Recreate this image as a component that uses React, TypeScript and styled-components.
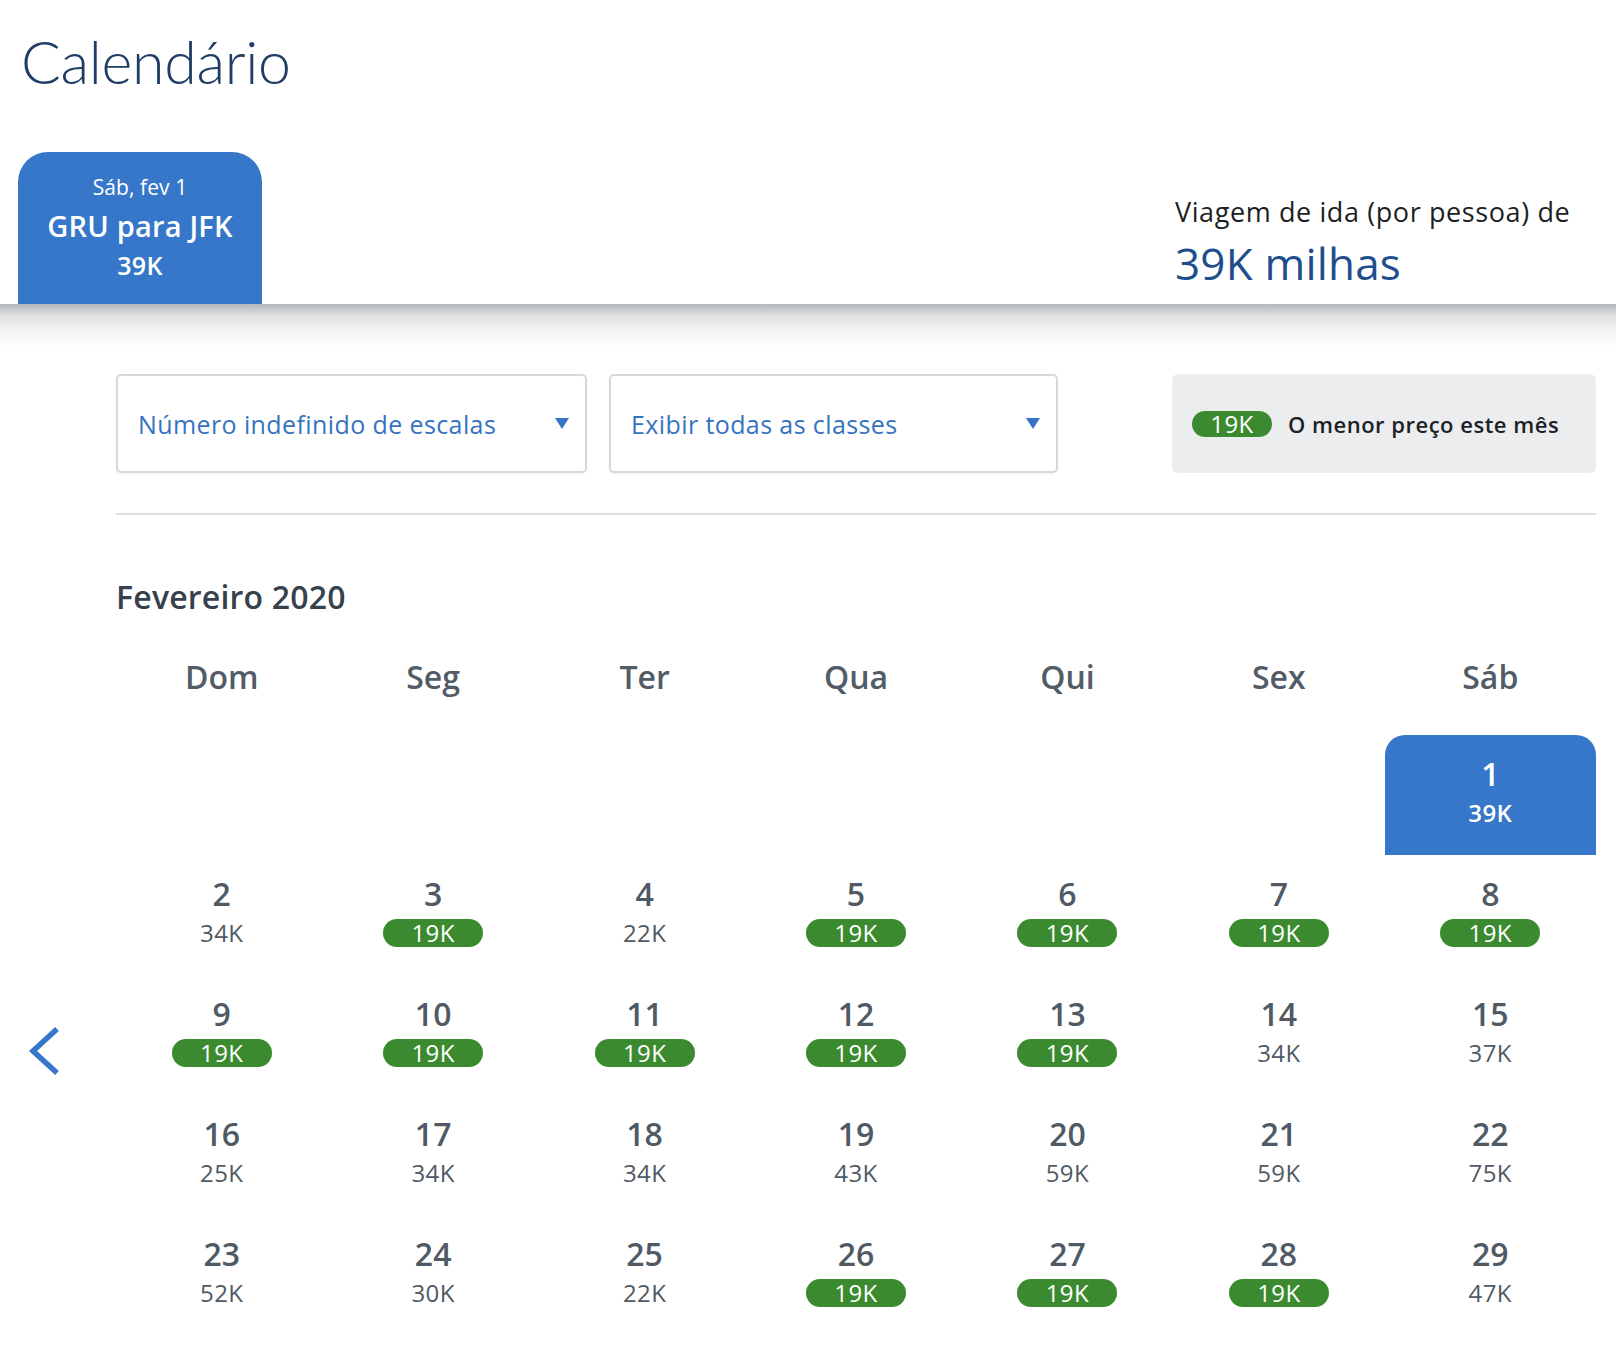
import React from "react"
import styled, { createGlobalStyle } from "styled-components"

const GlobalStyle = createGlobalStyle`
    body {
        margin: 0;
        background: #ffffff;
        font-family: "Open Sans", Lato, "Liberation Sans", sans-serif;
    }
`

const Page = styled.div`
    width: 1616px;
    min-height: 1372px;
    background: #ffffff;
`

const Header = styled.header`
    padding: 0 20px 0 18px;
`

const Title = styled.h1`
    margin: 0;
    padding: 24px 0 0 3px;
    font-family: Lato, "Open Sans", sans-serif;
    font-size: 59px;
    line-height: 76px;
    font-weight: 300;
    letter-spacing: -0.3px;
    color: #1f3d66;
`

const HeaderRow = styled.div`
    display: flex;
    justify-content: space-between;
    align-items: flex-end;
    margin-top: 52px;
`

const Tab = styled.div`
    width: 244px;
    height: 152px;
    box-sizing: border-box;
    padding-top: 21px;
    background: #3677c9;
    border-radius: 30px 30px 0 0;
    color: #ffffff;
    display: flex;
    flex-direction: column;
    align-items: center;
`

const TabDate = styled.div`
    font-size: 21px;
    line-height: 28px;
    font-weight: 400;
    letter-spacing: 0.1px;
`

const TabRoute = styled.div`
    margin-top: 7px;
    font-size: 29px;
    line-height: 36px;
    font-weight: 600;
    letter-spacing: 0.2px;
`

const TabPrice = styled.div`
    margin-top: 5px;
    font-size: 25px;
    line-height: 32px;
    font-weight: 600;
    letter-spacing: 0.3px;
`

const Summary = styled.div`
    width: 421px;
    padding-bottom: 14px;
`

const SummaryLabel = styled.div`
    font-size: 27px;
    line-height: 36px;
    color: #1b1f24;
    letter-spacing: 0.6px;
`

const SummaryValue = styled.div`
    margin-top: 6px;
    font-size: 44px;
    line-height: 54px;
    color: #1f4e8c;
    letter-spacing: 0.2px;
`

const ShadowBand = styled.div`
    height: 50px;
    background: linear-gradient(to bottom, #b5b8bc 0%, #dcdedf 22%, #eff0f0 45%, #fbfbfb 75%, #ffffff 100%);
`

const Content = styled.main`
    padding: 20px 20px 36px 116px;
`

const Filters = styled.div`
    display: flex;
    align-items: stretch;
    gap: 22px;
    height: 99px;
`

const Select = styled.div<{ $w: number }>`
    width: ${p => p.$w}px;
    box-sizing: border-box;
    border: 2px solid #d4d9dd;
    border-radius: 5px;
    box-shadow: 0 1px 2px rgba(0, 0, 0, 0.06);
    padding: 0 16px 0 20px;
    display: flex;
    align-items: center;
    justify-content: space-between;
    font-size: 25px;
    letter-spacing: 0.4px;
    color: #3673bf;
`

const Caret = styled.span`
    width: 0;
    height: 0;
    border-left: 7.5px solid transparent;
    border-right: 7.5px solid transparent;
    border-top: 11px solid #3673c6;
`

const Legend = styled.div`
    margin-left: auto;
    width: 424px;
    box-sizing: border-box;
    background: #ebedef;
    border-radius: 6px;
    display: flex;
    align-items: center;
    padding-left: 20px;
    gap: 16px;
    font-size: 22px;
    font-weight: 600;
    letter-spacing: 0.5px;
    color: #1c2126;
`

const Pill = styled.span<{ $w: number; $h: number }>`
    display: inline-flex;
    align-items: center;
    justify-content: center;
    width: ${p => p.$w}px;
    height: ${p => p.$h}px;
    border-radius: ${p => p.$h / 2}px;
    background: #3b8a2f;
    color: #ffffff;
    font-size: 24px;
    font-weight: 500;
    letter-spacing: 0.4px;
`

const Divider = styled.hr`
    margin: 40px 0 0;
    border: none;
    height: 2px;
    background: #dcdfe2;
`

const MonthTitle = styled.h2`
    margin: 62px 0 0;
    font-size: 32px;
    line-height: 40px;
    font-weight: 600;
    letter-spacing: 0.2px;
    color: #36414b;
`

const WeekDays = styled.div`
    display: grid;
    grid-template-columns: repeat(7, 1fr);
    margin-top: 40px;
`

const WeekDay = styled.div`
    text-align: center;
    font-size: 32px;
    line-height: 40px;
    font-weight: 600;
    color: #525c66;
`

const CalendarRow = styled.div`
    display: flex;
    margin: 38px 0 0 -116px;
`

const NavColumn = styled.div`
    width: 116px;
    display: flex;
    align-items: center;
    padding: 32px 0 0 27px;
    box-sizing: border-box;
`

const Grid = styled.div`
    flex: 1;
    display: grid;
    grid-template-columns: repeat(7, 1fr);
    grid-auto-rows: 120px;
`

const Cell = styled.div<{ $selected?: boolean }>`
    display: flex;
    flex-direction: column;
    align-items: center;
    padding-top: 19px;
    box-sizing: border-box;
    background: ${p => (p.$selected ? "#3677c9" : "transparent")};
    border-radius: ${p => (p.$selected ? "20px 20px 0 0" : "0")};
    color: ${p => (p.$selected ? "#ffffff" : "#4f5a64")};
`

const DayNum = styled.div`
    font-size: 32px;
    line-height: 40px;
    font-weight: 600;
`

const Price = styled.div<{ $strong?: boolean }>`
    margin-top: 5px;
    height: 28px;
    line-height: 28px;
    font-size: 24px;
    font-weight: ${p => (p.$strong ? 600 : 400)};
    letter-spacing: 0.4px;
`

const ChevronLeft = () => (
    <svg width="34" height="50" viewBox="0 0 34 50" fill="none">
        <path d="M30 3 L6 25 L30 47" stroke="#3677c9" strokeWidth="5.5" strokeLinecap="butt" strokeLinejoin="miter" />
    </svg>
)

type Day = { d: number; price: string; low?: boolean }

const days: Day[] = [
    { d: 1, price: "39K" },
    { d: 2, price: "34K" },
    { d: 3, price: "19K", low: true },
    { d: 4, price: "22K" },
    { d: 5, price: "19K", low: true },
    { d: 6, price: "19K", low: true },
    { d: 7, price: "19K", low: true },
    { d: 8, price: "19K", low: true },
    { d: 9, price: "19K", low: true },
    { d: 10, price: "19K", low: true },
    { d: 11, price: "19K", low: true },
    { d: 12, price: "19K", low: true },
    { d: 13, price: "19K", low: true },
    { d: 14, price: "34K" },
    { d: 15, price: "37K" },
    { d: 16, price: "25K" },
    { d: 17, price: "34K" },
    { d: 18, price: "34K" },
    { d: 19, price: "43K" },
    { d: 20, price: "59K" },
    { d: 21, price: "59K" },
    { d: 22, price: "75K" },
    { d: 23, price: "52K" },
    { d: 24, price: "30K" },
    { d: 25, price: "22K" },
    { d: 26, price: "19K", low: true },
    { d: 27, price: "19K", low: true },
    { d: 28, price: "19K", low: true },
    { d: 29, price: "47K" },
]

const weekDays = ["Dom", "Seg", "Ter", "Qua", "Qui", "Sex", "Sáb"]

// fevereiro 2020 começa num sábado
const leadingBlanks = 6

const App = () => {
    return (
        <Page>
            <GlobalStyle />
            <Header>
                <Title>Calendário</Title>
                <HeaderRow>
                    <Tab>
                        <TabDate>Sáb, fev 1</TabDate>
                        <TabRoute>GRU para JFK</TabRoute>
                        <TabPrice>39K</TabPrice>
                    </Tab>
                    <Summary>
                        <SummaryLabel>Viagem de ida (por pessoa) de</SummaryLabel>
                        <SummaryValue>39K milhas</SummaryValue>
                    </Summary>
                </HeaderRow>
            </Header>
            <ShadowBand />

            <Content>
                <Filters>
                    <Select $w={471}>
                        <span>Número indefinido de escalas</span>
                        <Caret />
                    </Select>
                    <Select $w={449}>
                        <span>Exibir todas as classes</span>
                        <Caret />
                    </Select>
                    <Legend>
                        <Pill $w={80} $h={26}>19K</Pill>
                        <span>O menor preço este mês</span>
                    </Legend>
                </Filters>

                <Divider />

                <MonthTitle>Fevereiro 2020</MonthTitle>

                <WeekDays>
                    {weekDays.map(w => (
                        <WeekDay key={w}>{w}</WeekDay>
                    ))}
                </WeekDays>

                <CalendarRow>
                    <NavColumn>
                        <ChevronLeft />
                    </NavColumn>
                    <Grid>
                        {Array.from({ length: leadingBlanks }).map((_, i) => (
                            <Cell key={"b" + i} />
                        ))}
                        {days.map(day => {
                            const selected = day.d === 1
                            return (
                                <Cell key={day.d} $selected={selected}>
                                    <DayNum>{day.d}</DayNum>
                                    {day.low ? (
                                        <Price>
                                            <Pill $w={100} $h={28}>{day.price}</Pill>
                                        </Price>
                                    ) : (
                                        <Price $strong={selected}>{day.price}</Price>
                                    )}
                                </Cell>
                            )
                        })}
                    </Grid>
                </CalendarRow>
            </Content>
        </Page>
    )
}

export default App
